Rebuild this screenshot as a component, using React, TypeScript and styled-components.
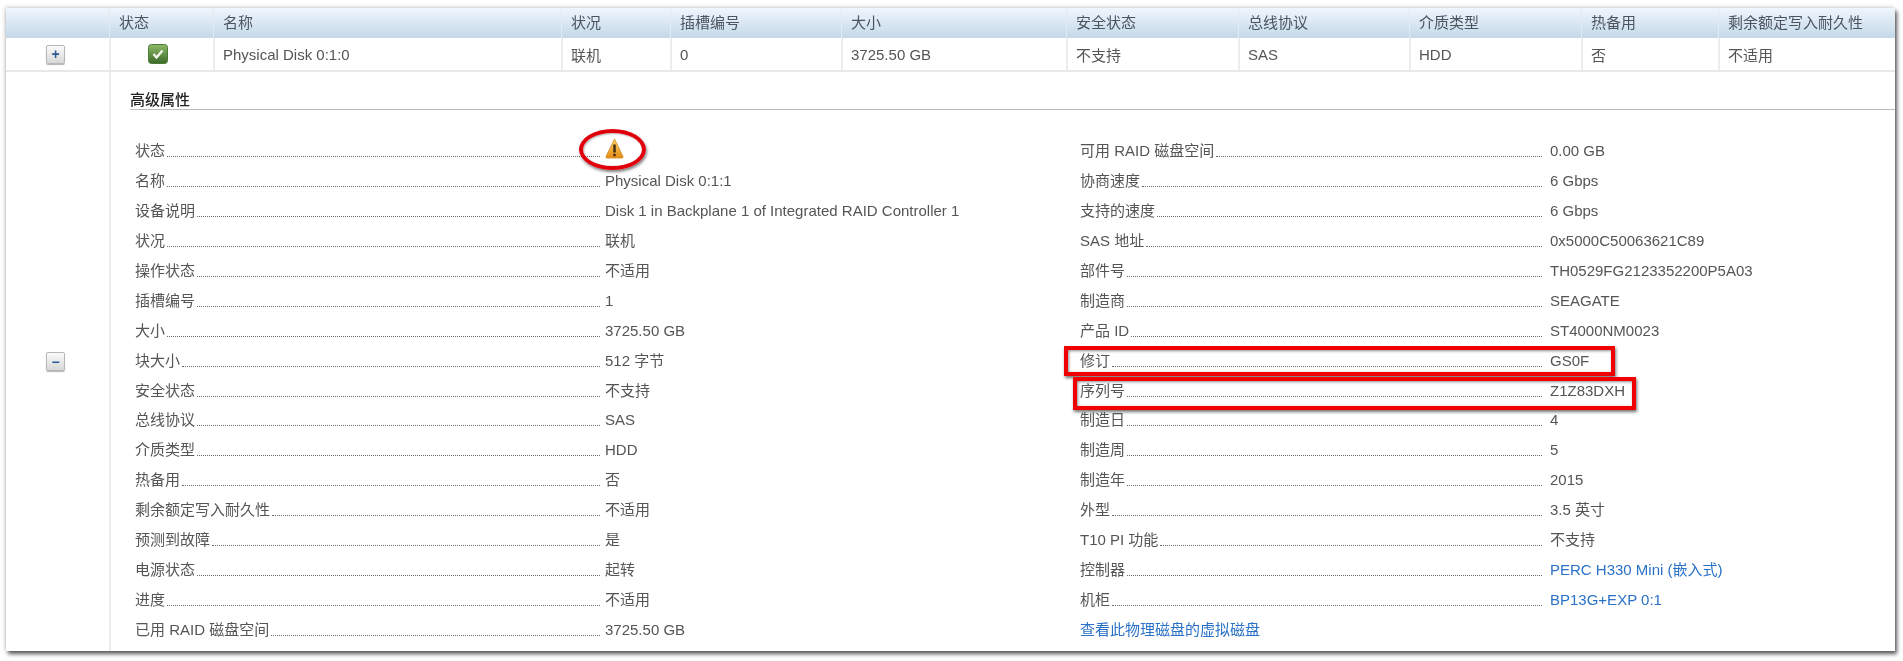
import React from "react";
import styled, { createGlobalStyle } from "styled-components";

const Global = createGlobalStyle`
  html, body { margin: 0; padding: 0; background: #fff; height: 661px; overflow: hidden; }
  body { font-family: "Liberation Sans", "Noto Sans CJK SC", Arial, sans-serif; }
`;

const Page = styled.div`
  padding: 8px 8px 0 6px;
  width: 1903px;
  height: 661px;
  box-sizing: border-box;
  filter: blur(0.5px);
`;

const Panel = styled.div`
  width: 1889px;
  height: 643px;
  background: #fff;
  box-shadow: 2px 3px 4px rgba(0, 0, 0, 0.65), -1px -1px 4px rgba(0, 0, 0, 0.18);
  color: #555;
  font-size: 15px;
  display: flex;
  flex-direction: column;
`;

const columns = "103px 104px 348px 109px 171px 225px 172px 171px 172px 137px 1fr";

const HeaderRow = styled.div`
  display: grid;
  grid-template-columns: ${columns};
  height: 30px;
  background: linear-gradient(#eff6fc, #c4d8e9);
`;

const HeaderCell = styled.div`
  padding-left: 9px;
  line-height: 29px;
  border-left: 1px solid #e3ebf2;
  color: #4a5560;
  &:first-child { border-left: 0; }
`;

const DataRow = styled.div`
  display: grid;
  grid-template-columns: ${columns};
  height: 34px;
  box-sizing: border-box;
  border-bottom: 2px solid #e8e8e8;
`;

const DataCell = styled.div<{ $center?: boolean }>`
  display: flex;
  align-items: center;
  justify-content: ${(p) => (p.$center ? "center" : "flex-start")};
  padding-left: ${(p) => (p.$center ? "0" : "8px")};
  border-left: 2px solid #ececec;
  &:first-child { border-left: 0; }
`;

const ToggleButton = styled.div`
  width: 19px;
  height: 19px;
  margin-right: 4px;
  box-sizing: border-box;
  border: 1px solid #b8b8b8;
  border-radius: 2px;
  background: linear-gradient(#fafafa, #d8d8d8);
  box-shadow: 0 1px 1px rgba(0, 0, 0, 0.3);
  color: #2c5a92;
  display: flex;
  align-items: center;
  justify-content: center;
  font-weight: bold;
  font-size: 14px;
  line-height: 1;
`;

const StatusIcon = styled.svg`
  margin-right: 8px;
`;

const DetailRow = styled.div`
  flex: 1;
  display: grid;
  grid-template-columns: 103px 1fr;
`;

const ExpandCell = styled.div`
  display: flex;
  align-items: center;
  justify-content: center;
`;

const DetailCell = styled.div`
  border-left: 2px solid #ececec;
  padding: 19px 0 0 19px;
`;

const SectionTitle = styled.div`
  height: 18px;
  line-height: 18px;
  border-bottom: 1px solid #bcbcbc;
  color: #222;
  font-size: 15px;
  font-weight: 500;
  margin-bottom: 26px;
`;

const Columns = styled.div`
  display: grid;
  grid-template-columns: 945px 1fr;
  padding-left: 5px;
`;

const Column = styled.div`
  display: flex;
  flex-direction: column;
`;

const PropRow = styled.div`
  position: relative;
  display: grid;
  grid-template-columns: 470px 1fr;
  height: 29.95px;
  line-height: 30px;
  white-space: nowrap;
`;

const PropLabel = styled.div<{ $end: number }>`
  display: flex;
  align-items: baseline;
  padding-right: ${(p) => p.$end}px;
`;

const Leader = styled.span`
  flex: 1;
  margin-left: 2px;
  border-bottom: 1px dotted #6a6a6a;
  transform: translateY(1px);
`;

const PropValue = styled.div`
  display: flex;
  align-items: center;
`;

const TextLink = styled.span`
  color: #2a72c8;
`;

const OvalMark = styled.div`
  position: absolute;
  left: 444px;
  top: -7px;
  width: 59px;
  height: 33px;
  border: 4px solid #e0000b;
  border-radius: 50%;
  box-shadow: 1px 2px 3px rgba(0, 0, 0, 0.5), inset 1px 1px 2px rgba(0, 0, 0, 0.3);
`;

const BoxMark = styled.div<{ $left: number; $top: number; $w: number; $h: number }>`
  position: absolute;
  left: ${(p) => p.$left}px;
  top: ${(p) => p.$top}px;
  width: ${(p) => p.$w}px;
  height: ${(p) => p.$h}px;
  border: 4px solid #f00000;
  box-shadow: 1px 2px 3px rgba(0, 0, 0, 0.55), inset 1px 1px 3px rgba(0, 0, 0, 0.45);
`;

const WarningIcon = styled.svg`
  margin-top: -5px;
`;

const Warning = () => (
  <WarningIcon width="19" height="21" viewBox="0 0 19 21">
    <defs>
      <linearGradient id="wg" x1="0" y1="0" x2="0" y2="1">
        <stop offset="0" stopColor="#fbd66a" />
        <stop offset="1" stopColor="#e58a14" />
      </linearGradient>
    </defs>
    <path d="M9.5 1 L18 18.5 Q18.3 20 17 20 L2 20 Q0.7 20 1 18.5 Z" fill="url(#wg)" stroke="#d08a20" strokeWidth="0.8" />
    <rect x="8.3" y="6.5" width="2.4" height="8" fill="#3a2a10" />
    <rect x="8.3" y="15.8" width="2.4" height="2.4" fill="#3a2a10" />
  </WarningIcon>
);

const Check = () => (
  <StatusIcon width="20" height="20" viewBox="0 0 20 20">
    <defs>
      <linearGradient id="cg" x1="0" y1="0" x2="0" y2="1">
        <stop offset="0" stopColor="#8fba68" />
        <stop offset="1" stopColor="#3b6a2a" />
      </linearGradient>
    </defs>
    <rect x="0.5" y="0.5" width="19" height="19" rx="3" fill="url(#cg)" stroke="#4a7a35" />
    <path d="M5.5 10 L8.5 13.5 L14.5 6.5" fill="none" stroke="#f4f4ee" strokeWidth="2.4" />
  </StatusIcon>
);

const headers = ["", "状态", "名称", "状况", "插槽编号", "大小", "安全状态", "总线协议", "介质类型", "热备用", "剩余额定写入耐久性"];
const rowValues = ["Physical Disk 0:1:0", "联机", "0", "3725.50 GB", "不支持", "SAS", "HDD", "否", "不适用"];

const left: [string, string][] = [
  ["状态", ""],
  ["名称", "Physical Disk 0:1:1"],
  ["设备说明", "Disk 1 in Backplane 1 of Integrated RAID Controller 1"],
  ["状况", "联机"],
  ["操作状态", "不适用"],
  ["插槽编号", "1"],
  ["大小", "3725.50 GB"],
  ["块大小", "512 字节"],
  ["安全状态", "不支持"],
  ["总线协议", "SAS"],
  ["介质类型", "HDD"],
  ["热备用", "否"],
  ["剩余额定写入耐久性", "不适用"],
  ["预测到故障", "是"],
  ["电源状态", "起转"],
  ["进度", "不适用"],
  ["已用 RAID 磁盘空间", "3725.50 GB"],
];

const right: [string, string][] = [
  ["可用 RAID 磁盘空间", "0.00 GB"],
  ["协商速度", "6 Gbps"],
  ["支持的速度", "6 Gbps"],
  ["SAS 地址", "0x5000C50063621C89"],
  ["部件号", "TH0529FG2123352200P5A03"],
  ["制造商", "SEAGATE"],
  ["产品 ID", "ST4000NM0023"],
  ["修订", "GS0F"],
  ["序列号", "Z1Z83DXH"],
  ["制造日", "4"],
  ["制造周", "5"],
  ["制造年", "2015"],
  ["外型", "3.5 英寸"],
  ["T10 PI 功能", "不支持"],
  ["控制器", "PERC H330 Mini (嵌入式)"],
  ["机柜", "BP13G+EXP 0:1"],
];

export default function App() {
  return (
    <Page>
      <Global />
      <Panel>
        <HeaderRow>
          {headers.map((h, i) => (
            <HeaderCell key={i}>{h}</HeaderCell>
          ))}
        </HeaderRow>
        <DataRow>
          <DataCell $center>
            <ToggleButton>+</ToggleButton>
          </DataCell>
          <DataCell $center>
            <Check />
          </DataCell>
          {rowValues.map((v, i) => (
            <DataCell key={i}>{v}</DataCell>
          ))}
        </DataRow>
        <DetailRow>
          <ExpandCell>
            <ToggleButton>−</ToggleButton>
          </ExpandCell>
          <DetailCell>
            <SectionTitle>高级属性</SectionTitle>
            <Columns>
              <Column>
                {left.map(([k, v]) => (
                  <PropRow key={k}>
                    <PropLabel $end={5}>
                      {k}
                      <Leader />
                    </PropLabel>
                    <PropValue>{v || <Warning />}</PropValue>
                    {!v && <OvalMark />}
                  </PropRow>
                ))}
              </Column>
              <Column>
                {right.map(([k, v]) => (
                  <PropRow key={k}>
                    <PropLabel $end={8}>
                      {k}
                      <Leader />
                    </PropLabel>
                    <PropValue>
                      {k === "控制器" || k === "机柜" ? <TextLink>{v}</TextLink> : v}
                    </PropValue>
                    {k === "修订" && <BoxMark $left={-16} $top={0} $w={543} $h={22} />}
                    {k === "序列号" && <BoxMark $left={-7} $top={1} $w={555} $h={25} />}
                  </PropRow>
                ))}
                <PropRow>
                  <TextLink>查看此物理磁盘的虚拟磁盘</TextLink>
                </PropRow>
              </Column>
            </Columns>
          </DetailCell>
        </DetailRow>
      </Panel>
    </Page>
  );
}
